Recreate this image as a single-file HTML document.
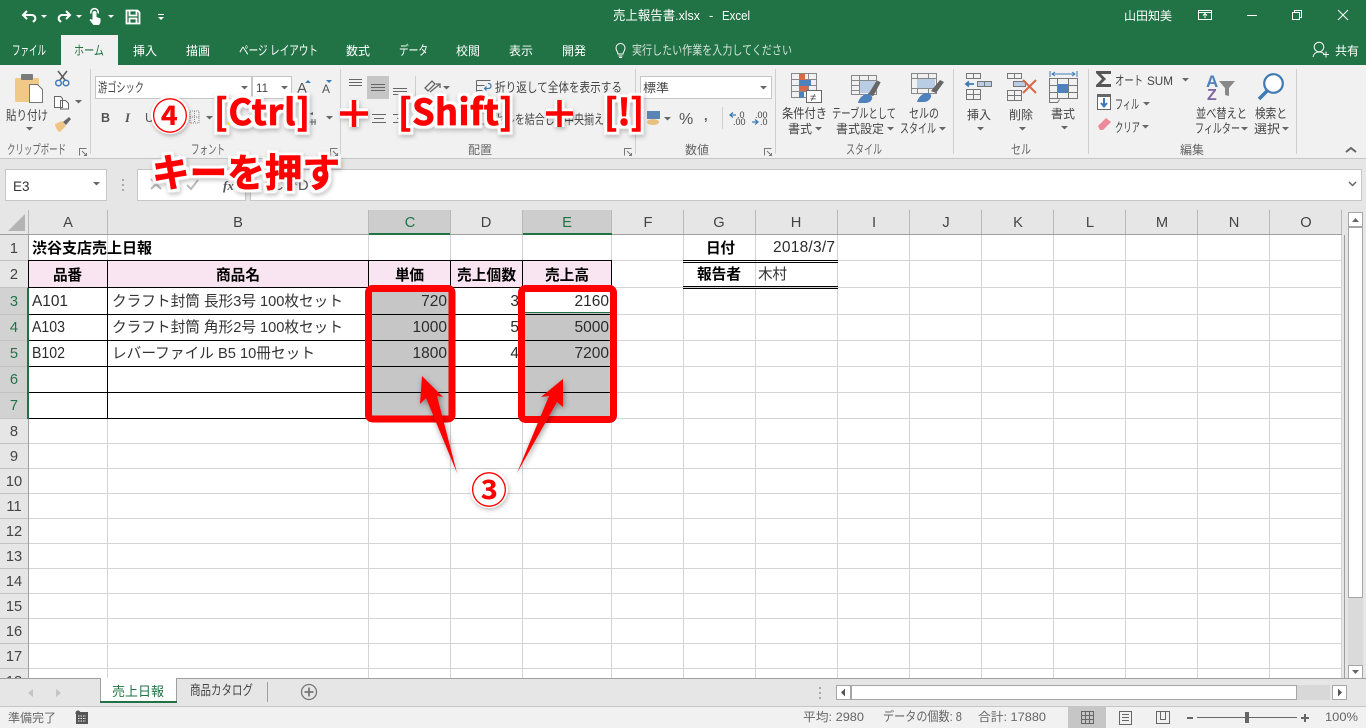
<!DOCTYPE html>
<html lang="ja"><head><meta charset="utf-8"><title>売上報告書.xlsx - Excel</title>
<style>
html,body{margin:0;padding:0;width:1366px;height:728px;overflow:hidden;background:#fff}
svg{display:block;position:absolute;left:0;top:0}
text{font-family:"Liberation Sans","Noto Sans CJK JP",sans-serif;white-space:pre}
.w{fill:#fff;font-size:12px}
.k{fill:#fff;font-size:13px}
.r{fill:#444;font-size:12px}
.rk{fill:#444;font-size:13px}
.g{fill:#666;font-size:12px}
.gk{fill:#666;font-size:13px}
.c{fill:#333;font-size:14.67px}
.d{fill:#2b2b2b;font-size:15.5px}
.b{fill:#000;font-size:14.67px;font-weight:700}
.h{fill:#444;font-size:14.67px;text-anchor:middle}
.hs{fill:#217346;font-size:14.67px;text-anchor:middle}
.n{text-anchor:end}
.a{fill:#f00;stroke:#f00;stroke-width:.8px;stroke-linejoin:round;font-weight:700;font-family:"Noto Sans CJK JP",sans-serif;filter:url(#ol)}
</style></head><body>
<svg width="1366" height="728" viewBox="0 0 1366 728">
<defs>
<g id="cw"><path d="M0 0h6l-3 3z" fill="#fff"/></g>
<g id="cd"><path d="M0 0h7l-3.500 3.500z" fill="#666"/></g>
<filter id="ds" x="-40%" y="-40%" width="180%" height="180%"><feDropShadow dx="1" dy="2" stdDeviation="3" flood-color="#000" flood-opacity=".4"/></filter>
<filter id="ws" x="-20%" y="-20%" width="140%" height="140%"><feDropShadow dx="1" dy="2" stdDeviation="2" flood-color="#000" flood-opacity=".25"/></filter>
<filter id="ol" x="-15%" y="-30%" width="130%" height="160%" color-interpolation-filters="sRGB">
<feMorphology in="SourceAlpha" operator="dilate" radius="3" result="d"/>
<feGaussianBlur in="d" stdDeviation=".5" result="d2"/>
<feFlood flood-color="#fff"/><feComposite in2="d2" operator="in" result="wh"/>
<feGaussianBlur in="d" stdDeviation="2" result="b"/><feOffset in="b" dx="1" dy="2" result="bo"/>
<feFlood flood-color="#000" flood-opacity=".25"/><feComposite in2="bo" operator="in" result="sh"/>
<feMerge><feMergeNode in="sh"/><feMergeNode in="wh"/><feMergeNode in="SourceGraphic"/></feMerge>
</filter>
</defs>

<!-- title bar + tabs -->
<rect width="1366" height="65" fill="#217346"/>
<rect x="61" y="35" width="57" height="31" fill="#f1f1f1"/>
<!-- quick access -->
<g fill="none" stroke="#fff" stroke-width="2">
<path d="M27 11l-4 4 4 4M23 15h9a3.500 3.500 0 0 1 3 5l-2 2"/>
<path d="M66 11l4 4-4 4M70 15h-8a3.500 3.500 0 0 0-3 5l2 2"/>
</g>
<use href="#cw" x="41" y="15"/><use href="#cw" x="76" y="15"/><use href="#cw" x="108" y="15"/>
<path d="M92.500 13a2 2 0 0 1 4 0v4l4 1.500v4l-1.500 2.500h-5.500l-4-5 1-1 2 .8z" fill="#fff"/>
<path d="M91 13.500a3.700 3.700 0 1 1 7 0" fill="none" stroke="#fff" stroke-width="1.500"/>
<path d="M126.500 10.500h11l2 2v11h-13z M129.500 10.500v5h7v-5 M129.500 23.500v-5h7v5" fill="none" stroke="#fff" stroke-width="1.800"/>
<path d="M158 14h6v1h-6zM158 17h6l-3 3z" fill="#fff"/>
<!-- tab labels -->
<text class="k" x="12" y="55" textLength="34" lengthAdjust="spacingAndGlyphs">ファイル</text>
<text x="74" y="55" textLength="30" lengthAdjust="spacingAndGlyphs" style="fill:#217346;font-size:13px">ホーム</text>
<text class="w" x="133" y="55" textLength="24" lengthAdjust="spacingAndGlyphs">挿入</text>
<text class="w" x="186" y="55" textLength="24" lengthAdjust="spacingAndGlyphs">描画</text>
<text class="k" x="239" y="55" textLength="79" lengthAdjust="spacingAndGlyphs">ページ レイアウト</text>
<text class="w" x="346" y="55" textLength="24" lengthAdjust="spacingAndGlyphs">数式</text>
<text class="k" x="399" y="55" textLength="29" lengthAdjust="spacingAndGlyphs">データ</text>
<text class="w" x="456" y="55" textLength="24" lengthAdjust="spacingAndGlyphs">校閲</text>
<text class="w" x="509" y="55" textLength="24" lengthAdjust="spacingAndGlyphs">表示</text>
<text class="w" x="562" y="55" textLength="24" lengthAdjust="spacingAndGlyphs">開発</text>
<path d="M618 54c0-2-2-3-2-6a4.500 4.500 0 0 1 9 0c0 3-2 4-2 6zM618.500 56h4M619 57.500h3" fill="none" stroke="#fff"/>
<text x="632" y="54.500" textLength="160" lengthAdjust="spacingAndGlyphs" style="fill:#d3e3da;font-size:12.500px">実行したい作業を入力してください</text>
<text class="w" x="613" y="20" textLength="87" lengthAdjust="spacingAndGlyphs" style="font-size:13px">売上報告書.xlsx</text>
<text class="w" x="709" y="20" style="font-size:13px">-</text>
<text class="w" x="722" y="20" textLength="28" lengthAdjust="spacingAndGlyphs" style="font-size:13px">Excel</text>
<text class="w" x="1124" y="20" textLength="48" lengthAdjust="spacingAndGlyphs">山田知美</text>
<!-- window controls -->
<g fill="none" stroke="#fff">
<path d="M1198.500 10.500h13v9h-13zM1198.500 12.500h13M1205 18v-4M1203 15.500l2-2 2 2"/>
<path d="M1247 15.500h10"/>
<path d="M1292.500 12.500h7v7h-7zM1294.500 12.500v-2h7v7h-2"/>
<path d="M1338 10l10 10M1348 10l-10 10"/>
<circle cx="1319" cy="47" r="4.800"/><path d="M1313 57c1-4 3-5 6-5s4 .5 5 2"/>
<path d="M1323 54.500h6M1326 51.500v6"/>
</g>
<text class="w" x="1335" y="55" textLength="24" lengthAdjust="spacingAndGlyphs">共有</text>

<!-- ribbon -->
<rect y="65" width="1366" height="94" fill="#f1f1f1"/>
<rect y="158" width="1366" height="1" fill="#c6c6c6"/>
<g fill="#cfcfcf">
<rect x="90" y="69" width="1" height="85"/><rect x="340" y="69" width="1" height="85"/><rect x="635" y="69" width="1" height="85"/><rect x="775" y="69" width="1" height="85"/><rect x="953" y="69" width="1" height="85"/><rect x="1088" y="69" width="1" height="85"/><rect x="1296" y="69" width="1" height="85"/>
<rect x="415" y="76" width="1" height="50"/><rect x="722" y="107" width="1" height="22"/>
</g>
<!-- group labels -->
<text class="gk" x="7" y="154" textLength="59" lengthAdjust="spacingAndGlyphs">クリップボード</text>
<text class="gk" x="191" y="154" textLength="34" lengthAdjust="spacingAndGlyphs">フォント</text>
<text class="g" x="468" y="154" textLength="24" lengthAdjust="spacingAndGlyphs">配置</text>
<text class="g" x="685" y="154" textLength="24" lengthAdjust="spacingAndGlyphs">数値</text>
<text class="gk" x="846" y="154" textLength="36" lengthAdjust="spacingAndGlyphs">スタイル</text>
<text class="gk" x="1011" y="154" textLength="20" lengthAdjust="spacingAndGlyphs">セル</text>
<text class="g" x="1180" y="154" textLength="24" lengthAdjust="spacingAndGlyphs">編集</text>
<!-- dialog launchers -->
<g fill="none" stroke="#777">
<path d="M79.500 155.500v-7h7M82 151l4 4M84 155.500h2.500v-2.500"/>
<path d="M330.500 155.500v-7h7M333 151l4 4M335 155.500h2.500v-2.500"/>
<path d="M624.500 155.500v-7h7M627 151l4 4M629 155.500h2.500v-2.500"/>
<path d="M764.500 155.500v-7h7M767 151l4 4M769 155.500h2.500v-2.500"/>
<path d="M1346 152l5-4 5 4" stroke="#666" stroke-width="2"/>
</g>

<!-- clipboard -->
<rect x="15" y="78" width="24" height="24" rx="1" fill="#f0c987"/>
<rect x="21" y="74" width="12" height="6" rx="1" fill="#7a7a7a"/>
<path d="M29.500 84.500h8l5 5v13h-13z" fill="#fff" stroke="#777"/>
<text class="rk" x="6" y="120" textLength="42" lengthAdjust="spacingAndGlyphs">貼り付け</text>
<use href="#cd" x="26" y="127"/>
<g fill="none" stroke="#5b5b5b" stroke-width="1.500"><path d="M58 71l7 9M67 71l-7 9"/></g>
<g fill="none" stroke="#3f79b5" stroke-width="1.500"><circle cx="58.500" cy="83" r="2.800"/><circle cx="66" cy="83" r="2.800"/></g>
<path d="M54.500 96.500h6l2 2v9h-8z M60.500 100.500h5l3 3v5.500h-8z" fill="#fff" stroke="#666"/>
<use href="#cd" x="75" y="100"/>
<path d="M63 122l6-5 2 2-5 6z" fill="#666"/><path d="M55 124l7-3 4 5-6 6c-2 0-5-5-5-8z" fill="#efc585"/>

<!-- font -->
<rect x="95.500" y="76.500" width="156" height="22" fill="#fff" stroke="#c6c6c6"/>
<rect x="252.500" y="76.500" width="39" height="22" fill="#fff" stroke="#c6c6c6"/>
<text class="rk" x="98" y="92" textLength="46" lengthAdjust="spacingAndGlyphs">游ゴシック</text>
<text class="r" x="256" y="92" textLength="12" lengthAdjust="spacingAndGlyphs">11</text>
<use href="#cd" x="241" y="86"/><use href="#cd" x="281" y="86"/>
<text x="297" y="93" style="font-size:15px;fill:#555">A</text>
<text x="322" y="93" style="font-size:12px;fill:#555">A</text>
<path d="M305 83h6l-3-3zM326 80h6l-3 3z" fill="#3f79b5"/>
<text x="101" y="122" style="font-size:12.500px;font-weight:700;fill:#555">B</text>
<text x="125" y="122" style="font-size:13px;font-style:italic;fill:#555;font-family:'Liberation Serif',serif;font-weight:700">I</text>
<text x="145" y="122" style="font-size:12.500px;fill:#555">U</text>
<use href="#cd" x="206" y="116"/>
<use href="#cd" x="326" y="116"/>
<path d="M190 111h9v12h-9zM194.500 111v12M190 117h9" fill="none" stroke="#888" stroke-dasharray="1 1"/>
<rect x="228" y="122" width="8" height="3" fill="#ff0"/>
<path d="M308 122h8M309 119v6M312 119v6M315 119v6" stroke="#666" fill="none"/>
<path d="M309 114l4-2v3z" fill="#666"/>

<!-- alignment -->
<rect x="367" y="76" width="22" height="23" fill="#c6c6c6"/>
<g stroke="#666" fill="none">
<path d="M349 79.500h13M349 82.500h13M349 85.500h13"/>
<path d="M371 84.500h14M371 87.500h14M371 90.500h14"/>
<path d="M393 88.500h14M393 91.500h14M393 94.500h14"/>
<path d="M352 117.500h12M372 114.500h14M374 118.500h10M372 122.500h14"/>
<path d="M393 114.500h14M397 118.500h10M393 122.500h14"/>
</g>
<g fill="none" stroke="#666" stroke-width="1.300">
<path d="M425 88l7-7 3 3-7 7zM430 92l10-8M436 84h4v4"/>
</g>
<use href="#cd" x="443" y="86"/>
<path d="M476.500 80.500h14M476.500 85.500h8M476.500 90.500h6M476.500 80.500v11" fill="none" stroke="#666"/>
<path d="M488 83.500c2 0 3 1 3 2.500s-1 2.500-3 2.500h-3M486.500 86.500l-2 2 2 2" fill="none" stroke="#3f79b5" stroke-width="1.200"/>
<text class="rk" x="495" y="92" textLength="127" lengthAdjust="spacingAndGlyphs">折り返して全体を表示する</text>
<text class="rk" x="495" y="124" textLength="109" lengthAdjust="spacingAndGlyphs">セルを結合して中央揃え</text>
<path d="M477 113h13v11h-13z" fill="none" stroke="#888"/>
<use href="#cd" x="622" y="118"/>

<!-- number -->
<rect x="640.500" y="76.500" width="131" height="22" fill="#fff" stroke="#c6c6c6"/>
<text class="r" x="643" y="92" textLength="26" lengthAdjust="spacingAndGlyphs">標準</text>
<use href="#cd" x="760" y="86"/>
<rect x="647" y="111" width="13" height="8" fill="#5a85b5"/><ellipse cx="653" cy="122" rx="6" ry="3" fill="#e9c07f"/>
<use href="#cd" x="664" y="117"/>
<text x="679" y="124" style="font-size:16px;fill:#555">%</text>
<text x="704" y="120" style="font-size:13px;font-weight:700;fill:#555">,</text>
<text x="737" y="118" style="font-size:9px;fill:#444">.0</text><text x="733" y="125" style="font-size:9px;fill:#444">.00</text>
<path d="M736 115h-6M733 112.500l-3 2.500 3 2.500" fill="none" stroke="#3f79b5" stroke-width="1.300"/>
<text x="755" y="118" style="font-size:9px;fill:#444">.00</text><text x="760" y="125" style="font-size:9px;fill:#444">.0</text>
<path d="M752 122h6M755 119.500l3 2.500-3 2.500" fill="none" stroke="#3f79b5" stroke-width="1.300"/>

<!-- styles -->
<g fill="none" stroke="#888"><path d="M791.500 73.500h25v24h-25zM791.500 79.500h25M791.500 85.500h25M791.500 91.500h25M799.500 73.500v24M808.500 73.500v24"/></g>
<rect x="799" y="74" width="6" height="6" fill="#d9694a"/><rect x="799" y="80" width="12" height="6" fill="#4f81bd"/><rect x="799" y="86" width="9" height="5" fill="#d9694a"/><rect x="799" y="92" width="5" height="6" fill="#4f81bd"/>
<rect x="806.500" y="90.500" width="15" height="12" fill="#fff" stroke="#666"/>
<text x="810" y="101" style="font-size:11px;fill:#444">≠</text>
<text class="rk" x="782" y="118" textLength="45" lengthAdjust="spacingAndGlyphs">条件付き</text>
<text class="r" x="788" y="133" textLength="24" lengthAdjust="spacingAndGlyphs">書式</text><use href="#cd" x="815" y="127"/>
<g fill="none" stroke="#888"><path d="M851.500 75.500h25v19h-25zM851.500 80.500h25M851.500 85.500h25M851.500 90.500h25M859.500 75.500v19M868.500 75.500v19"/></g>
<rect x="860" y="81" width="16" height="12" fill="#b9cde5"/>
<path d="M869 94l8-13 3 1.500-7 13z" fill="#666" stroke="#666"/><path d="M858 103c1-5 5-9 10-9 3 0 5 3 4 5-1 3-4 4-7 4z" fill="#4f81bd"/>
<text class="rk" x="832" y="118" textLength="64" lengthAdjust="spacingAndGlyphs">テーブルとして</text>
<text class="r" x="836" y="133" textLength="48" lengthAdjust="spacingAndGlyphs">書式設定</text><use href="#cd" x="887" y="127"/>
<g fill="none" stroke="#888"><path d="M911.500 73.500h25v20h-25zM911.500 78.500h25M911.500 88.500h25M917.500 73.500v5M928.500 73.500v5M917.500 89v5M928.500 89v5"/></g>
<rect x="917" y="79" width="18" height="9" fill="#b9cde5"/>
<path d="M931 91l9-11 4 2-8 11z" fill="#666"/><path d="M917 102c1-4 5-9 10-9 3 0 5 2 4 4-1 3-4 5-7 5z" fill="#4f81bd"/>
<text class="rk" x="909" y="118" textLength="30" lengthAdjust="spacingAndGlyphs">セルの</text>
<text class="rk" x="900" y="133" textLength="36" lengthAdjust="spacingAndGlyphs">スタイル</text><use href="#cd" x="939" y="127"/>

<!-- cells -->
<g fill="none" stroke="#777">
<path d="M966.500 73.500h14v5h-14zM973.500 73.500v5"/>
<path d="M966.500 89.500h14v10h-14zM966.500 94.500h14M973.500 89.500v10"/>
<rect x="977.500" y="81.500" width="14" height="5" fill="#b9cde5"/><path d="M984.500 81.500v5"/>
<path d="M1007.500 73.500h14v5h-14zM1014.500 73.500v5"/>
<path d="M1007.500 90.500h14v10h-14zM1007.500 95.500h14M1014.500 90.500v10"/>
<rect x="1013.500" y="81.500" width="12" height="5" fill="#b9cde5"/>
<path d="M1049.500 78.500h28v20h-28zM1049.500 85.500h28M1049.500 92.500h28M1057.500 78.500v20M1068.500 78.500v20M1049.500 98.500v4h8l2-3"/>
</g>
<path d="M974 84h-8M969 81.500l-3 2.500 3 2.500" fill="none" stroke="#3f79b5" stroke-width="1.800"/>
<path d="M1023 80l13 13M1036 80l-13 13" stroke="#d9694a" stroke-width="2" fill="none"/>
<rect x="1057" y="84" width="11" height="9" fill="#4f81bd"/>
<path d="M1050 71v6M1077 71v6M1052 74h23M1055 72l-3 2 3 2M1072 72l3 2-3 2" fill="none" stroke="#3f79b5"/>
<text class="r" x="967" y="119" textLength="24" lengthAdjust="spacingAndGlyphs">挿入</text><use href="#cd" x="977" y="127"/>
<text class="r" x="1009" y="119" textLength="24" lengthAdjust="spacingAndGlyphs">削除</text><use href="#cd" x="1019" y="127"/>
<text class="r" x="1051" y="118" textLength="24" lengthAdjust="spacingAndGlyphs">書式</text><use href="#cd" x="1061" y="126"/>

<!-- editing -->
<path d="M1096 71h15v3h-10l5 5-5 5h10v3h-15v-2l6-6-6-6z" fill="#555"/>
<text class="rk" x="1115" y="85" textLength="28" lengthAdjust="spacingAndGlyphs">オート</text>
<text class="r" x="1147" y="85" textLength="26" lengthAdjust="spacingAndGlyphs">SUM</text><use href="#cd" x="1182" y="78"/>
<rect x="1097.500" y="94.500" width="13" height="15" fill="#fff" stroke="#666"/><rect x="1097" y="94" width="14" height="3" fill="#666"/>
<path d="M1104 98v8M1101 103l3 3.500 3-3.500" fill="none" stroke="#3f79b5" stroke-width="2"/>
<text class="rk" x="1115" y="109" textLength="24" lengthAdjust="spacingAndGlyphs">フィル</text><use href="#cd" x="1143" y="102"/>
<path d="M1098 126l8-8 5 4-8 8h-3z" fill="#ea8a9a"/>
<text class="rk" x="1115" y="132" textLength="25" lengthAdjust="spacingAndGlyphs">クリア</text><use href="#cd" x="1142" y="125"/>
<text x="1206" y="87" style="font-size:17px;font-weight:700;fill:#4f81bd">A</text>
<text x="1207" y="100" style="font-size:16px;font-weight:700;fill:#8064a2">Z</text>
<path d="M1219 81h16l-6 7v8l-4-1v-7z" fill="#888"/>
<circle cx="1273.500" cy="83.500" r="9.300" fill="#fff" stroke="#3f79b5" stroke-width="2.200"/><path d="M1267 91l-8 8" stroke="#3f79b5" stroke-width="3.500" fill="none"/>
<text class="rk" x="1196" y="118" textLength="51" lengthAdjust="spacingAndGlyphs">並べ替えと</text>
<text class="rk" x="1195" y="133" textLength="45" lengthAdjust="spacingAndGlyphs">フィルター</text><use href="#cd" x="1241" y="127"/>
<text class="rk" x="1255" y="118" textLength="32" lengthAdjust="spacingAndGlyphs">検索と</text>
<text class="r" x="1254" y="133" textLength="26" lengthAdjust="spacingAndGlyphs">選択</text><use href="#cd" x="1282" y="127"/>

<!-- formula bar -->
<rect y="159" width="1366" height="51" fill="#e6e6e6"/>
<rect x="5.500" y="169.500" width="101" height="31" fill="#fff" stroke="#c6c6c6"/>
<text x="13" y="191" style="font-size:13.500px;fill:#333">E3</text>
<use href="#cd" x="93" y="182"/>
<path d="M122 179h2v2h-2zM122 184h2v2h-2zM122 189h2v2h-2z" fill="#aaa"/>
<rect x="137.500" y="169.500" width="108" height="31" fill="#fff" stroke="#c6c6c6"/>
<rect x="250.500" y="169.500" width="1111" height="31" fill="#fff" stroke="#c6c6c6"/>
<path d="M151 179l10 10M161 179l-10 10" stroke="#bbb" stroke-width="2" fill="none"/>
<path d="M187 185l4 4 7-9" stroke="#bbb" stroke-width="2" fill="none"/>
<text x="223" y="190" style="font-family:'Liberation Serif',serif;font-style:italic;font-weight:700;font-size:13px;fill:#555">fx</text>
<text x="264" y="190" textLength="53" style="font-size:14.670px;fill:#555">=C3*D3</text>
<path d="M1349 182l3.500 3.500 3.500-3.500" stroke="#666" stroke-width="1.500" fill="none"/>

<!-- headers -->
<rect y="210" width="1366" height="25" fill="#e6e6e6"/>
<rect x="0" y="235" width="28" height="445" fill="#e6e6e6"/>
<path d="M25 214v17h-17z" fill="#b4b4b4"/>
<rect x="369" y="210" width="81" height="24" fill="#cdcdcd"/>
<rect x="523" y="210" width="89" height="24" fill="#cdcdcd"/>
<g stroke="#b8b8b8" fill="none">
<path d="M28.500 210v24M107.500 210v24M368.500 210v24M450.500 210v24M522.500 210v24M611.500 210v24M683.500 210v24M755.500 210v24M837.500 210v24M909.500 210v24M981.500 210v24M1053.500 210v24M1125.500 210v24M1197.500 210v24M1269.500 210v24M1341.500 210v24"/>
</g>
<rect y="234" width="1345" height="1" fill="#9f9f9f"/>
<rect x="369" y="233" width="81" height="2" fill="#217346"/>
<rect x="523" y="233" width="89" height="2" fill="#217346"/>
<text class="h" x="68" y="227">A</text><text class="h" x="238" y="227">B</text><text class="hs" x="410" y="227">C</text><text class="h" x="486" y="227">D</text><text class="hs" x="567" y="227">E</text><text class="h" x="648" y="227">F</text><text class="h" x="719" y="227">G</text><text class="h" x="796" y="227">H</text><text class="h" x="874" y="227">I</text><text class="h" x="946" y="227">J</text><text class="h" x="1018" y="227">K</text><text class="h" x="1090" y="227">L</text><text class="h" x="1162" y="227">M</text><text class="h" x="1234" y="227">N</text><text class="h" x="1306" y="227">O</text>

<!-- grid -->
<path d="M107.500 235V678M368.500 235V678M450.500 235V678M522.500 235V678M611.500 235V678M683.500 235V678M755.500 235V678M837.500 235V678M909.500 235V678M981.500 235V678M1053.500 235V678M1125.500 235V678M1197.500 235V678M1269.500 235V678M1341.500 235V678M29 260.500H1344M29 287.500H1344M29 314.500H1344M29 340.500H1344M29 366.500H1344M29 392.500H1344M29 418.500H1344M29 443.500H1344M29 468.500H1344M29 493.500H1344M29 518.500H1344M29 543.500H1344M29 568.500H1344M29 593.500H1344M29 618.500H1344M29 643.500H1344M29 668.500H1344" stroke="#d4d4d4" fill="none"/>
<!-- row headers -->
<rect x="0" y="288" width="27" height="131" fill="#d2d2d2"/>
<path d="M0 260.500H28M0 287.500H28M0 314.500H28M0 340.500H28M0 366.500H28M0 392.500H28M0 418.500H28M0 443.500H28M0 468.500H28M0 493.500H28M0 518.500H28M0 543.500H28M0 568.500H28M0 593.500H28M0 618.500H28M0 643.500H28M0 668.500H28" stroke="#c2c2c2" fill="none"/>
<rect x="28" y="235" width="1" height="445" fill="#9f9f9f"/>
<rect x="27" y="288" width="2" height="131" fill="#217346"/>
<text class="h" x="14" y="253">1</text><text class="h" x="14" y="279">2</text><text class="hs" x="14" y="306">3</text><text class="hs" x="14" y="332">4</text><text class="hs" x="14" y="358">5</text><text class="hs" x="14" y="384">6</text><text class="hs" x="14" y="410">7</text><text class="h" x="14" y="436">8</text><text class="h" x="14" y="461">9</text><text class="h" x="14" y="486">10</text><text class="h" x="14" y="511">11</text><text class="h" x="14" y="536">12</text><text class="h" x="14" y="561">13</text><text class="h" x="14" y="586">14</text><text class="h" x="14" y="611">15</text><text class="h" x="14" y="636">16</text><text class="h" x="14" y="661">17</text><text class="h" x="14" y="686">18</text>

<!-- table fills -->
<rect x="29" y="261" width="583" height="26" fill="#f9e5f1"/>
<rect x="369" y="288" width="81" height="130" fill="#c6c6c6"/>
<rect x="523" y="288" width="88" height="130" fill="#c6c6c6"/>
<rect x="523" y="288" width="88" height="25" fill="#fff"/>
<rect x="525" y="312" width="85" height="1" fill="#217346"/>
<path d="M29 260.500H612M29 287.500H612M29 314.500H612M29 340.500H612M29 366.500H612M29 392.500H612M29 418.500H612M107.500 260V419M368.500 260V419M450.500 260V419M522.500 260V419M611.500 260V419M28.500 260v28" stroke="#000" fill="none"/>
<path d="M683 260.500H838M683 262.500H838M683 286.500H838M683 288.500H838" stroke="#000" fill="none"/>

<!-- cell text -->
<text class="b" x="32" y="253" textLength="120" lengthAdjust="spacingAndGlyphs">渋谷支店売上日報</text>
<text class="b" x="53" y="280" textLength="29">品番</text>
<text class="b" x="216" y="280" textLength="44">商品名</text>
<text class="b" x="395" y="280" textLength="29">単価</text>
<text class="b" x="457" y="280" textLength="59">売上個数</text>
<text class="b" x="545" y="280" textLength="44">売上高</text>
<text class="d" x="32" y="306" textLength="36" lengthAdjust="spacingAndGlyphs">A101</text>
<text class="d" x="32" y="332" textLength="33" lengthAdjust="spacingAndGlyphs">A103</text>
<text class="d" x="32" y="358" textLength="33" lengthAdjust="spacingAndGlyphs">B102</text>
<text class="c" x="112" y="306" textLength="231">クラフト封筒 長形3号 100枚セット</text>
<text class="c" x="112" y="332" textLength="231">クラフト封筒 角形2号 100枚セット</text>
<text class="c" x="112" y="358" textLength="203">レバーファイル B5 10冊セット</text>
<text class="d n" x="447" y="306">720</text>
<text class="d n" x="447" y="332">1000</text>
<text class="d n" x="447" y="358">1800</text>
<text class="d n" x="519" y="306">3</text>
<text class="d n" x="519" y="332">5</text>
<text class="d n" x="519" y="358">4</text>
<text class="d n" x="609" y="306">2160</text>
<text class="d n" x="609" y="332">5000</text>
<text class="d n" x="609" y="358">7200</text>
<text class="b" x="706" y="253" textLength="29">日付</text>
<text class="d" x="773" y="252" textLength="62">2018/3/7</text>
<text class="b" x="697" y="279" textLength="44">報告者</text>
<text class="c" x="758" y="279" textLength="29">木村</text>

<!-- vertical scroll -->
<rect x="1342" y="210" width="24" height="468" fill="#e6e6e6"/>
<rect x="1344" y="235" width="1" height="443" fill="#9f9f9f"/>
<rect x="1348" y="227" width="15" height="451" fill="#dadada"/>
<rect x="1348.500" y="212.500" width="14" height="14" fill="#fff" stroke="#a6a6a6"/>
<path d="M1352 222h7l-3.500-4z" fill="#666"/>
<rect x="1348.500" y="227.500" width="14" height="370" fill="#fff" stroke="#a6a6a6"/>
<rect x="1348.500" y="665.500" width="14" height="13" fill="#fff" stroke="#a6a6a6"/>
<path d="M1352 670h7l-3.500 4z" fill="#666"/>

<!-- sheet tab bar -->
<rect y="678" width="1366" height="28" fill="#e6e6e6"/>
<rect y="678" width="1366" height="1" fill="#9f9f9f"/>
<rect x="100.500" y="678" width="76" height="24" fill="#fff"/>
<path d="M100.500 678v25M176.500 678v25" stroke="#9f9f9f" fill="none"/>
<rect x="100" y="701" width="77" height="2" fill="#217346"/>
<path d="M33 689v8l-5-4zM56 689v8l5-4z" fill="#c4c4c4"/>
<text x="112" y="696" textLength="52" lengthAdjust="spacingAndGlyphs" style="font-size:13px;fill:#217346">売上日報</text>
<text x="190" y="695" textLength="63" lengthAdjust="spacingAndGlyphs" style="font-size:13.500px;fill:#444">商品カタログ</text>
<rect x="267" y="682" width="1" height="20" fill="#9f9f9f"/>
<circle cx="309" cy="692" r="7.500" fill="none" stroke="#777" stroke-width="1.300"/>
<path d="M304.500 692h9M309 687.500v9" stroke="#777" stroke-width="1.800" fill="none"/>
<path d="M819 687h2v2h-2zM819 692h2v2h-2zM819 697h2v2h-2z" fill="#aaa"/>
<rect x="1297" y="685" width="33" height="15" fill="#d8d8d8"/>
<rect x="836.500" y="685.500" width="14" height="14" fill="#fff" stroke="#a6a6a6"/>
<path d="M845 688.500v8l-4-4z" fill="#555"/>
<rect x="851.500" y="685.500" width="445" height="14" fill="#fff" stroke="#a6a6a6"/>
<rect x="1332.500" y="685.500" width="14" height="14" fill="#fff" stroke="#a6a6a6"/>
<path d="M1338 688.500v8l4-4z" fill="#555"/>

<!-- status bar -->
<rect y="706" width="1366" height="22" fill="#f1f1f1"/>
<rect y="706" width="1366" height="1" fill="#c6c6c6"/>
<text class="g" x="8" y="722" textLength="48" lengthAdjust="spacingAndGlyphs">準備完了</text>
<circle cx="78" cy="713" r="2.500" fill="#555"/><path d="M76 712h12v12H76z" fill="#555"/><path d="M78 716h8M78 718.500h8M78 721h8" stroke="#eee" stroke-dasharray="1.500 1" fill="none"/>
<text class="g" x="803" y="721" textLength="61" lengthAdjust="spacingAndGlyphs">平均: 2980</text>
<text class="gk" x="883" y="721" textLength="79" lengthAdjust="spacingAndGlyphs">データの個数: 8</text>
<text class="g" x="978" y="721" textLength="68" lengthAdjust="spacingAndGlyphs">合計: 17880</text>
<rect x="1068" y="707" width="38" height="21" fill="#c6c6c6"/>
<g fill="none" stroke="#666">
<path d="M1081.500 711.500h12v12h-12zM1085.500 711.500v12M1089.500 711.500v12M1081.500 715.500h12M1081.500 719.500h12"/>
<path d="M1119.500 711.500h12v13h-12zM1122 714.500h7M1122 717.500h7M1122 720.500h7"/>
<path d="M1156.500 711.500h13v12h-13zM1160.500 711.500v8h5v-8"/>
<path d="M1197 717.500h100"/>
</g>
<path d="M1187 717h6v2h-6zM1301 717h8v2h-8zM1304 714h2v8h-2z" fill="#666"/>
<rect x="1245" y="712" width="4" height="11" fill="#666"/>
<text class="g" x="1325" y="721" textLength="33" lengthAdjust="spacingAndGlyphs">100%</text>

<!-- annotation rectangles and arrows -->
<rect x="368.500" y="288.500" width="83.500" height="130.500" rx="4" fill="none" stroke="#f00" stroke-width="7"/>
<rect x="521.500" y="288.500" width="92" height="131" rx="4" fill="none" stroke="#f00" stroke-width="7"/>
<g filter="url(#ds)">
<path d="M422 376L443 397 437 396 457 473 426 398 420 404z" fill="#f00"/>
<path d="M563 379L541 397 549 396 517 473 557 402 563 407z" fill="#f00"/>
</g>
<g filter="url(#ws)">
<circle cx="489" cy="489" r="19" fill="#fff"/>
<text x="489" y="503" text-anchor="middle" style="font-size:36px;font-weight:700;fill:#f00;font-family:'Noto Sans CJK JP',sans-serif">③</text>
</g>
<g filter="url(#ws)">
<circle cx="170" cy="115" r="19" fill="#fff"/>
<text x="170" y="129" text-anchor="middle" style="font-size:36px;font-weight:700;fill:#f00;font-family:'Noto Sans CJK JP',sans-serif">④</text>
</g>
<text class="a" x="214" y="125" textLength="96" style="font-size:36px">[Ctrl]</text>
<text class="a" x="398" y="125" textLength="115" style="font-size:36px">[Shift]</text>
<text class="a" x="604" y="125" textLength="40" style="font-size:36px">[!]</text>
<g filter="url(#ws)">
<path d="M340 113.500h28M354 100v27M546 113.500h27M559.500 100v27" stroke="#fff" stroke-width="10" fill="none"/>
<path d="M340 113.500h28M354 100v27M546 113.500h27M559.500 100v27" stroke="#f00" stroke-width="4.500" fill="none"/>
</g>
<text class="a" x="152" y="187" textLength="188" lengthAdjust="spacingAndGlyphs" style="font-size:39px">キーを押す</text>
</svg>
</body></html>
